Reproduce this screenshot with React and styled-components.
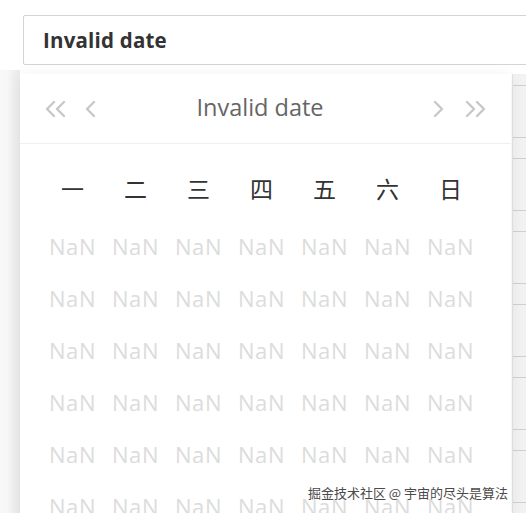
import React from "react";
import styled, { createGlobalStyle } from "styled-components";

const Global = createGlobalStyle`
  html, body { margin: 0; padding: 0; background: #fff; }
  #root { width: 526px; height: 513px; }
`;

const Page = styled.div`
  position: relative;
  width: 526px;
  height: 513px;
  overflow: hidden;
  background: #fff;
  font-family: "Open Sans", "Noto Sans", "Noto Sans CJK SC", sans-serif;
`;

const InputBox = styled.div`
  margin: 15px 0 0 23px;
  width: 540px;
  height: 50px;
  box-sizing: border-box;
  border: 1px solid #d4d4d4;
  border-radius: 2px;
  display: flex;
  align-items: center;
  padding-left: 19px;
  font-size: 20.5px;
  font-weight: 700;
  color: #333;
  letter-spacing: 0.2px;
`;

const Backdrop = styled.div`
  margin-top: 5px;
  height: 443px;
  display: flex;
`;

const LeftGutter = styled.div`
  width: 20px;
  background: linear-gradient(to right, #f8f8f8 0px, #f6f6f6 8px, #efefef 14px, #ececec 20px);
`;

const Spacer = styled.div`
  flex: 1;
`;

const RightStrip = styled.div`
  width: 14px;
  margin-top: 4px;
  box-sizing: border-box;
  border-left: 1px solid #e4e4e4;
  background-color: #f2f2f2;
  background-image: repeating-linear-gradient(
    to bottom,
    transparent 0px,
    transparent 11px,
    #cfcfcf 11px,
    #cfcfcf 12px,
    transparent 12px,
    transparent 63px,
    #cfcfcf 63px,
    #cfcfcf 64px,
    transparent 64px,
    transparent 73px
  );
`;

const Panel = styled.div`
  position: absolute;
  top: 74px;
  left: 20px;
  width: 491px;
  height: 460px;
  background: #fff;
  box-shadow: 0 2px 14px rgba(0, 0, 0, 0.07);
`;

const Header = styled.div`
  height: 70px;
  box-sizing: border-box;
  border-bottom: 1px solid #efefef;
  display: flex;
  align-items: center;
  padding: 0 23px 0 25px;
`;

const NavGroup = styled.div`
  display: flex;
  align-items: center;
  gap: ${(p) => p.$gap}px;
`;

const Title = styled.div`
  flex: 1;
  text-align: center;
  font-size: 23.5px;
  color: #666;
  padding-bottom: 4px;
  padding-right: 10px;
`;

const Body = styled.div`
  padding: 18px 0 0 21px;
`;

const Grid = styled.div`
  display: grid;
  grid-template-columns: repeat(7, 63px);
`;

const WeekCell = styled.div`
  height: 52px;
  display: flex;
  align-items: center;
  justify-content: center;
  font-family: "Noto Sans CJK SC", sans-serif;
  font-size: 23px;
  font-weight: 400;
  color: #333;
  margin-bottom: 6px;
`;

const DayCell = styled.div`
  height: 52px;
  display: flex;
  align-items: center;
  justify-content: center;
  font-size: 22px;
  color: #dcdcdc;
  letter-spacing: 0.6px;
`;

const Watermark = styled.div`
  position: absolute;
  right: 18px;
  top: 483px;
  font-family: "Noto Sans CJK SC", sans-serif;
  font-size: 13px;
  color: #4a4a4a;
  white-space: nowrap;
  text-shadow: 0 0 2px #fff;
`;

const Chevron = ({ dir = "left", double = false }) => {
  const w = double ? 23 : 12;
  const one = (x) =>
    dir === "left"
      ? `M${x + 9} 2 L${x + 2} 9 L${x + 9} 16`
      : `M${x + 2} 2 L${x + 9} 9 L${x + 2} 16`;
  return (
    <svg width={w} height="18" viewBox={`0 0 ${w} 18`} fill="none">
      <path d={one(0)} stroke="#c8c8c8" strokeWidth="2.4" strokeLinecap="round" strokeLinejoin="round" />
      {double && (
        <path d={one(10)} stroke="#c8c8c8" strokeWidth="2.4" strokeLinecap="round" strokeLinejoin="round" />
      )}
    </svg>
  );
};

const weekdays = ["一", "二", "三", "四", "五", "六", "日"];

export default function App() {
  return (
    <>
      <Global />
      <Page>
        <InputBox>Invalid date</InputBox>
        <Backdrop>
          <LeftGutter />
          <Spacer />
          <RightStrip />
        </Backdrop>
        <Panel>
          <Header>
            <NavGroup $gap={17}>
              <Chevron dir="left" double />
              <Chevron dir="left" />
            </NavGroup>
            <Title>Invalid date</Title>
            <NavGroup $gap={20}>
              <Chevron dir="right" />
              <Chevron dir="right" double />
            </NavGroup>
          </Header>
          <Body>
            <Grid>
              {weekdays.map((d) => (
                <WeekCell key={d}>{d}</WeekCell>
              ))}
              {Array.from({ length: 42 }).map((_, i) => (
                <DayCell key={i}>NaN</DayCell>
              ))}
            </Grid>
          </Body>
        </Panel>
        <Watermark>掘金技术社区 @ 宇宙的尽头是算法</Watermark>
      </Page>
    </>
  );
}
